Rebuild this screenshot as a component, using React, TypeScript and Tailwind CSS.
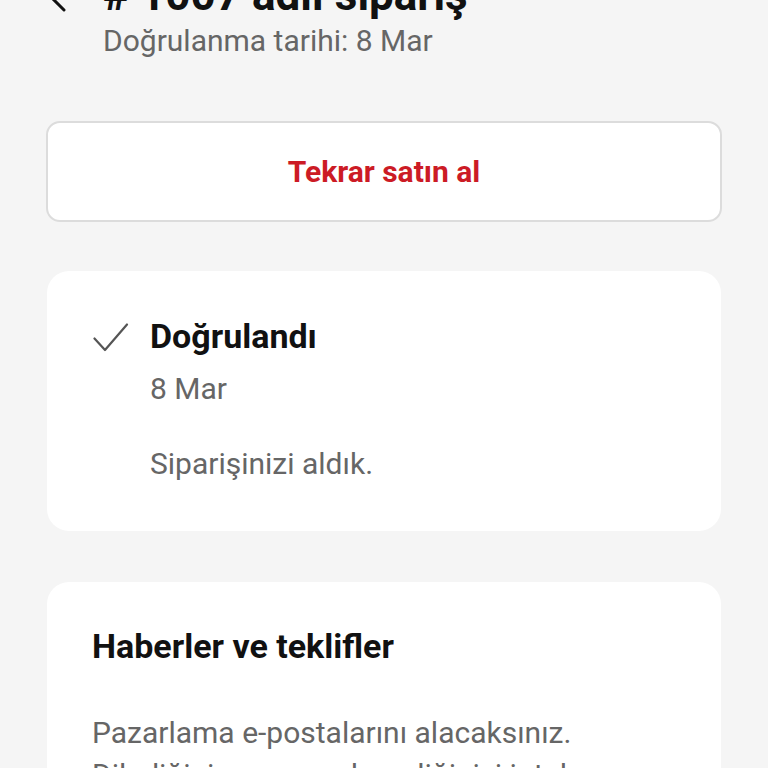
import React from "react";

const font = { fontFamily: "Roboto, 'Noto Sans', sans-serif" };

const App: React.FC = () => {
  return (
    <div className="min-h-[768px] w-full bg-[#f5f5f5] overflow-hidden" style={font}>
      {/* header */}
      <div className="flex items-start pl-[46px] pr-[46px]">
        <div className="w-[57px] shrink-0 -mt-[31px] h-[52px] flex items-center">
          <svg width="22" height="34" viewBox="0 0 22 34" fill="none">
            <path d="M18 2 L3 17 L18 32" stroke="#111" strokeWidth="3" strokeLinecap="round" strokeLinejoin="round" />
          </svg>
        </div>
        <div className="flex flex-col">
          <h1 className="-mt-[31px] text-[44px] leading-[52px] font-bold text-[#111]">
            # 1007 adlı sipariş
          </h1>
          <p className="text-[30px] leading-[40px] text-[#666]">Doğrulanma tarihi: 8 Mar</p>
        </div>
      </div>

      <div className="px-[46px] mt-[60px] flex flex-col">
        <button
          type="button"
          className="h-[101px] w-full rounded-[14px] border-2 border-[#dcdcdc] bg-white text-[30px] font-bold text-[#cc1b25]"
        >
          Tekrar satın al
        </button>

        {/* status card */}
        <div className="mt-[49px] mx-[1px] rounded-[22px] bg-white pl-[46px] pr-[46px] pt-[45px] pb-[47px] flex">
          <div className="w-[57px] shrink-0 h-[40px] flex items-center">
            <svg width="36" height="30" viewBox="0 0 36 30" fill="none" className="mt-[4px]">
              <path d="M1.5 15.5 L12 27 L34 1.5" stroke="#555" strokeWidth="2.2" strokeLinecap="round" strokeLinejoin="round" />
            </svg>
          </div>
          <div className="flex flex-col">
            <h2 className="text-[34px] leading-[40px] font-bold text-[#111]">Doğrulandı</h2>
            <p className="mt-[13px] text-[30px] leading-[40px] text-[#666]">8 Mar</p>
            <p className="mt-[35px] text-[30px] leading-[40px] text-[#666]">Siparişinizi aldık.</p>
          </div>
        </div>

        {/* news card */}
        <div className="mt-[51px] mx-[1px] rounded-[22px] bg-white pl-[45px] pr-[45px] pt-[44px] pb-[40px]">
          <h2 className="text-[34px] leading-[40px] font-bold text-[#111]">Haberler ve teklifler</h2>
          <p className="mt-[46px] text-[30px] leading-[42px] text-[#666]">
            Pazarlama e-postalarını alacaksınız.
            <br />
            Dilediğiniz zaman aboneliğinizi iptal edebilirsiniz.
          </p>
        </div>
      </div>
    </div>
  );
};

export default App;
